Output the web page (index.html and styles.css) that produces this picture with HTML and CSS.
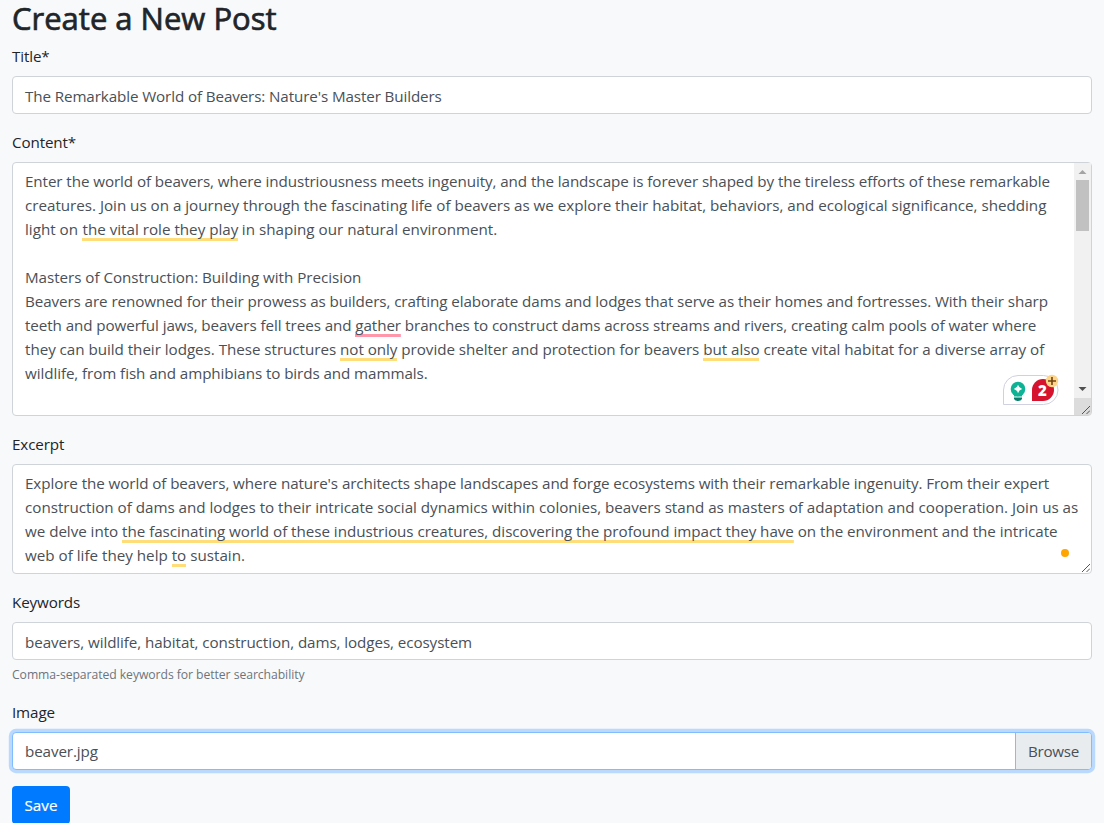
FILE: index.html
```html
<!DOCTYPE html>
<html lang="en">
<head>
<meta charset="utf-8">
<title>Create a New Post</title>
<link rel="stylesheet" href="styles.css">
</head>
<body>
<main class="page">
  <h1 class="heading">Create a New Post</h1>
  <form class="form">
    <div class="group">
      <div class="label">Title*</div>
      <div class="control single"><span class="line w-title">The Remarkable World of Beavers: Nature's Master Builders</span></div>
    </div>
    <div class="group">
      <div class="label">Content*</div>
      <div class="control area content">
        <div class="text">
          <span class="line tight">Enter the world of beavers, where industriousness meets ingenuity, and the landscape is forever shaped by the tireless efforts of these remarkable</span>
          <span class="line loose">creatures. Join us on a journey through the fascinating life of beavers as we explore their habitat, behaviors, and ecological significance, shedding</span>
          <span class="line">light on <mark class="mark nudge">the vital role they play</mark> in shaping our natural environment.</span>
          <span class="line"></span>
          <span class="line medium">Masters of Construction: Building with Precision</span>
          <span class="line tight">Beavers are renowned for their prowess as builders, crafting elaborate dams and lodges that serve as their homes and fortresses. With their sharp</span>
          <span class="line tight">teeth and powerful jaws, beavers fell trees and <mark class="mark pink">gather</mark> branches to construct dams across streams and rivers, creating calm pools of water where</span>
          <span class="line medium">they can build their lodges. These structures <mark class="mark">not only</mark> provide shelter and protection for beavers <mark class="mark">but also</mark> create vital habitat for a diverse array of</span>
          <span class="line tight">wildlife, from fish and amphibians to birds and mammals.</span>
        </div>
        <div class="scrollbar">
          <svg class="arrow" width="17" height="17" viewBox="0 0 17 17"><path d="M4.500 11h8l-4-4z" fill="#a3a3a3"/></svg>
          <div class="thumb"></div>
          <svg class="arrow down" width="17" height="17" viewBox="0 0 17 17"><path d="M4.500 6h8l-4 4z" fill="#505050"/></svg>
          <div class="corner"><svg class="grip" width="8" height="8" viewBox="0 0 8 8"><path d="M0 8l8-8M4.500 8l3.500-3.500" stroke="#555" fill="none"/></svg></div>
        </div>
        <svg class="badge" width="57" height="34" viewBox="0 0 57 34">
          <path d="M.5 31.500V17A14.500 14.500 0 0 1 15 2.500H40.500A14.500 14.500 0 0 1 40.500 31.500Z" fill="#fff" stroke="#cfd0e0"/>
          <circle cx="15" cy="16" r="7.300" fill="#0eb396"/>
          <path d="M11 20h8v3.500h-8z" fill="#0eb396"/>
          <path d="M11 24.500h8v1.500q-1 2-4 2t-4-2z" fill="#087f6c"/>
          <path d="M15 11.800q.9 3.300 4.200 4.200q-3.300.9-4.200 4.200q-.9-3.300-4.200-4.200q3.300-.9 4.200-4.200z" fill="#fff"/>
          <path d="M29 28V17A11 11 0 0 1 40 6A11 11 0 0 1 40 28Z" fill="#d6132f"/>
          <text x="39.300" y="22.500" text-anchor="middle" class="count">2</text>
          <circle cx="49" cy="8" r="6.200" fill="#fdd58a"/>
          <path d="M49 4v8M45 8h8" stroke="#70430f" stroke-width="1.600"/>
        </svg>
      </div>
    </div>
    <div class="group">
      <div class="label">Excerpt</div>
      <div class="control area excerpt">
        <div class="text">
          <span class="line tight">Explore the world of beavers, where nature's architects shape landscapes and forge ecosystems with their remarkable ingenuity. From their expert</span>
          <span class="line loose">construction of dams and lodges to their intricate social dynamics within colonies, beavers stand as masters of adaptation and cooperation. Join us as</span>
          <span class="line medium">we delve into <mark class="mark">the fascinating world of these industrious creatures, discovering the profound impact they have</mark> on the environment and the intricate</span>
          <span class="line">web of life they help <mark class="mark">to</mark> sustain.</span>
        </div>
        <span class="dot"></span>
        <svg class="grip free" width="8" height="8" viewBox="0 0 8 8"><path d="M0 8l8-8M4.500 8l3.500-3.500" stroke="#555" fill="none"/></svg>
      </div>
    </div>
    <div class="group">
      <div class="label">Keywords</div>
      <div class="control single"><span class="line tight">beavers, wildlife, habitat, construction, dams, lodges, ecosystem</span></div>
      <div class="help">Comma-separated keywords for better searchability</div>
    </div>
    <div class="group">
      <div class="label">Image</div>
      <div class="control file"><span class="line name">beaver.jpg</span><span class="browse">Browse</span></div>
    </div>
    <button class="save" type="button">Save</button>
  </form>
</main>
</body>
</html>
```
FILE: styles.css
```css
* { box-sizing: border-box; }
html, body { height: 100%; overflow: hidden; }
body {
  margin: 0;
  background: #f8f9fb;
  color: #212529;
  font: 15.2px/24px "Open Sans", "Noto Sans", sans-serif;
}
.page { padding: 0 12px; }
.heading {
  margin: 0 0 8.4px;
  font-size: 31px;
  font-weight: 400;
  line-height: 36px;
  -webkit-text-stroke: .7px #212529;
}
.group { margin-bottom: 16px; }
.label { margin-bottom: 8px; letter-spacing: -.12px; }
.control {
  position: relative;
  height: 38px;
  padding: 6px 12px;
  border: 1px solid #ced4da;
  border-radius: 4px;
  background: #fff;
  color: #495057;
}
.single { padding-top: 7px; }
.line { display: block; height: 24px; white-space: nowrap; }
.tight { letter-spacing: -.083px; }
.medium { letter-spacing: -.038px; }
.loose { letter-spacing: -.017px; }
.w-title { letter-spacing: -.11px; }
.area { display: flex; padding: 0; }
.text { flex: 1; min-width: 0; padding: 6px 0 0 12px; }
.content { height: 254px; }
.excerpt { height: 110px; }
.mark {
  padding-bottom: 2px;
  background: linear-gradient(#ffdd78, #ffdd78) bottom / 100% 3px no-repeat;
  color: inherit;
}
.nudge { margin-left: .5px; margin-right: -.5px; }
.pink { background-image: linear-gradient(#ff96aa, #ff96aa); }
.scrollbar { display: flex; flex-direction: column; width: 17px; background: #f1f1f1; }
.arrow { display: block; }
.thumb { width: 13px; height: 51px; margin-left: 2px; background: #c1c1c1; }
.down { margin-top: auto; }
.corner { display: flex; align-items: flex-end; justify-content: flex-end; height: 17px; padding: 1px; background: #dcdcdc; }
.badge { position: absolute; left: 990px; top: 210px; }
.count { font: 800 15px "Open Sans", sans-serif; fill: #fff; }
.dot { position: absolute; right: 22px; bottom: 16px; width: 8px; height: 8px; border-radius: 50%; background: #ffa500; }
.free { position: absolute; right: 1px; bottom: 1px; }
.help { margin-top: 5px; height: 19px; color: #6c757d; font-size: 12.2px; line-height: 19px; letter-spacing: -.06px; }
.file { display: flex; padding: 0; border-color: #80bdff; box-shadow: 0 0 0 3.2px rgba(0, 123, 255, .25); }
.name { flex: 1; padding: 6px 12px; letter-spacing: -.1px; }
.browse { width: 76px; padding: 6px 12px; border-left: 1px solid #80bdff; border-radius: 0 3px 3px 0; background: #e9ecef; letter-spacing: -.3px; }
.save { display: block; width: 58px; height: 38px; padding: 0; border: 0; border-radius: 4px; background: #007bff; color: #fff; font: inherit; -webkit-text-stroke: .2px #fff; }
```
